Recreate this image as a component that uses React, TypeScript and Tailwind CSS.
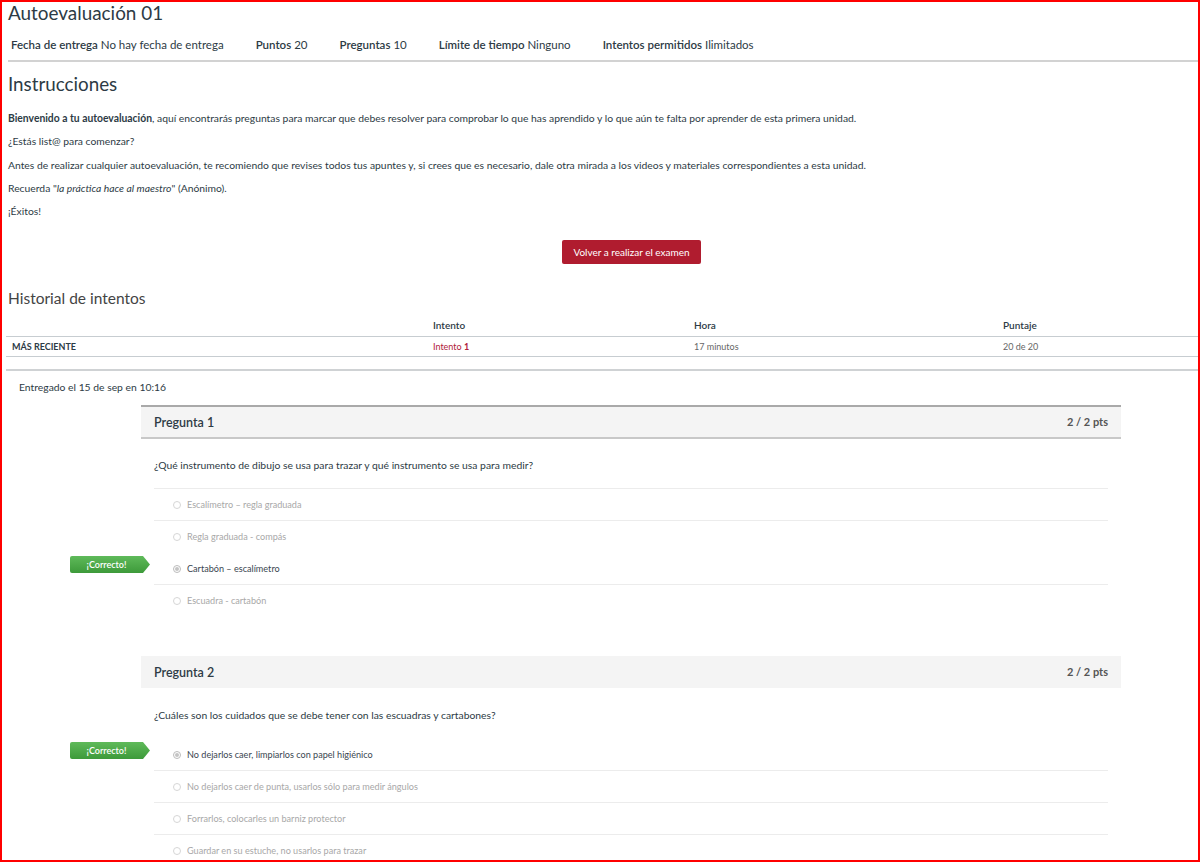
import React from "react";

type Answer = { text: string; selected?: boolean };

const q1: Answer[] = [
  { text: "Escalímetro – regla graduada" },
  { text: "Regla graduada - compás" },
  { text: "Cartabón – escalímetro", selected: true },
  { text: "Escuadra - cartabón" },
];

const q2: Answer[] = [
  { text: "No dejarlos caer, limpiarlos con papel higiénico", selected: true },
  { text: "No dejarlos caer de punta, usarlos sólo para medir ángulos" },
  { text: "Forrarlos, colocarles un barniz protector" },
  { text: "Guardar en su estuche, no usarlos para trazar" },
];

function Badge() {
  return (
    <div className="absolute left-[-84px] top-[3px] flex h-[17px] items-stretch">
      <div className="flex w-[73px] items-center justify-center rounded-l-[2px] bg-gradient-to-b from-[#5fba5a] to-[#3d9a3a] text-[9px] font-semibold text-white">
        ¡Correcto!
      </div>
      <svg width="7" height="17" viewBox="0 0 7 17" className="block">
        <defs>
          <linearGradient id="gg" x1="0" y1="0" x2="0" y2="1">
            <stop offset="0" stopColor="#5fba5a" />
            <stop offset="1" stopColor="#3d9a3a" />
          </linearGradient>
        </defs>
        <polygon points="0,0 7,8.5 0,17" fill="url(#gg)" />
      </svg>
    </div>
  );
}

function Question({
  n,
  text,
  answers,
  topBorder,
  textPt,
}: {
  n: number;
  text: string;
  answers: Answer[];
  topBorder: boolean;
  textPt: string;
}) {
  return (
    <div className="ml-[139px] w-[980px]">
      <div
        className={
          topBorder
            ? "flex h-[34px] items-center justify-between border-t-2 border-b-2 border-t-[#a9a9a9] border-b-[#c8c8c8] bg-[#f4f4f4] px-[13px] pt-[3px]"
            : "flex h-[32px] items-center justify-between bg-[#f4f4f4] px-[13px] pt-[3px]"
        }
      >
        <span className="text-[12.5px] font-semibold text-[#2d3b45]">Pregunta {n}</span>
        <span className="mb-[4px] text-[11px] font-bold text-[#555]">2 / 2 pts</span>
      </div>
      <div className={"px-[13px] " + textPt}>
        <div className="h-[16px] text-[10.35px] leading-[16px] text-[#2d3b45]">{text}</div>
        <div className="mt-[15px]">
          {answers.map((a, i) => (
            <div
              key={i}
              className={
                "relative flex h-[32px] items-center pl-[19px] " +
                (a.selected ? "border-t border-transparent" : "border-t border-[#ececec]")
              }
            >
              {a.selected && <Badge />}
              <span
                className={
                  "mr-[6px] flex h-[8px] w-[8px] items-center justify-center rounded-full border " +
                  (a.selected ? "border-[#bbb]" : "border-[#d6d6d6]")
                }
              >
                {a.selected && <span className="h-[4px] w-[4px] rounded-full bg-[#c4c4c4]" />}
              </span>
              <span
                className={
                  "text-[9.1px] " + (a.selected ? "text-[#3a4650]" : "text-[#a8a8a8]")
                }
              >
                {a.text}
              </span>
            </div>
          ))}
        </div>
      </div>
    </div>
  );
}

export default function App() {
  return (
    <div
      className="box-border h-[862px] w-[1200px] overflow-hidden border-2 border-[#ff0000] bg-white text-[#2d3b45]"
      style={{ fontFamily: "Lato, 'Open Sans', 'Liberation Sans', sans-serif" }}
    >
      <div className="pl-[6px]">
        <div className="flex h-[22px] items-center text-[18.9px] leading-[22px] text-[#2d3b45]">
          Autoevaluación 01
        </div>
        <div className="flex h-[38px] items-center gap-[32px] border-b-2 border-[#d2d2d2] pl-[3px] pt-[6px] text-[11.5px]">
          <div>
            <span className="font-semibold">Fecha de entrega</span>{" "}
            <span className="font-normal">No hay fecha de entrega</span>
          </div>
          <div>
            <span className="font-semibold">Puntos</span> <span>20</span>
          </div>
          <div>
            <span className="font-semibold">Preguntas</span> <span>10</span>
          </div>
          <div>
            <span className="font-semibold">Límite de tiempo</span> <span>Ninguno</span>
          </div>
          <div>
            <span className="font-semibold">Intentos permitidos</span> <span>Ilimitados</span>
          </div>
        </div>
        <div className="flex h-[45px] items-center text-[18.8px] text-[#2d3b45]">Instrucciones</div>
        <div className="text-[10.35px] leading-[23.25px] text-[#2d3b45]">
          <p>
            <strong className="font-bold">Bienvenido a tu autoevaluación</strong>, aquí encontrarás
            preguntas para marcar que debes resolver para comprobar lo que has aprendido y lo que
            aún te falta por aprender de esta primera unidad.
          </p>
          <p>¿Estás list@ para comenzar?</p>
          <p>
            Antes de realizar cualquier autoevaluación, te recomiendo que revises todos tus apuntes
            y, si crees que es necesario, dale otra mirada a los videos y materiales
            correspondientes a esta unidad.
          </p>
          <p>
            Recuerda "<em>la práctica hace al maestro</em>" (Anónimo).
          </p>
          <p>¡Éxitos!</p>
        </div>
        <div className="mt-[17px] flex pl-[554px]">
          <button className="flex h-[24px] w-[139px] items-center justify-center rounded-[2px] bg-[#b01c2f] text-[10px] text-white">
            Volver a realizar el examen
          </button>
        </div>
        <div className="mt-[20px] flex h-[28px] items-center text-[15.5px] text-[#444]">
          Historial de intentos
        </div>
      </div>
      <div className="ml-[4px]">
        <div className="grid h-[25px] grid-cols-[427px_261px_309px_1fr] items-center border-b border-[#c7cdd1] pt-[2px] text-[10px] font-semibold text-[#2d3b45]">
          <div />
          <div>Intento</div>
          <div>Hora</div>
          <div>Puntaje</div>
        </div>
        <div className="grid h-[20px] grid-cols-[427px_261px_309px_1fr] items-center border-b border-[#c7cdd1] text-[9px]">
          <div className="pl-[6px] font-bold text-[#2d3b45]">MÁS RECIENTE</div>
          <div className="text-[#b0203a]">
            Intento <span className="font-bold">1</span>
          </div>
          <div className="text-[#666]">17 minutos</div>
          <div className="text-[#666]">20 de 20</div>
        </div>
        <div className="mt-[12px] border-t-2 border-[#cfd2d4]" />
      </div>
      <div className="flex h-[34px] items-center pl-[17px] text-[10.35px] text-[#2d3b45]">
        Entregado el 15 de sep en 10:16
      </div>
      <Question
        n={1}
        text="¿Qué instrumento de dibujo se usa para trazar y qué instrumento se usa para medir?"
        answers={q1}
        topBorder={true}
        textPt="pt-[18px]"
      />
      <div className="h-[40px]" />
      <Question
        n={2}
        text="¿Cuáles son los cuidados que se debe tener con las escuadras y cartabones?"
        answers={q2}
        topBorder={false}
        textPt="pt-[19px]"
      />
    </div>
  );
}
